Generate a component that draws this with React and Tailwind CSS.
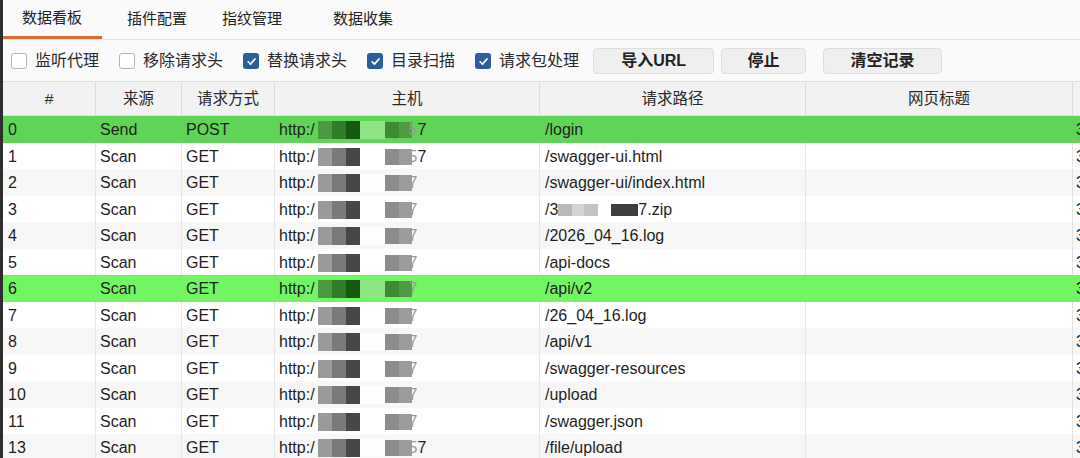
const rows = [
  { id: "0", src: "Send", method: "POST", tail: "57", path: "/login", hl: "a" },
  { id: "1", src: "Scan", method: "GET", tail: "57", path: "/swagger-ui.html" },
  { id: "2", src: "Scan", method: "GET", tail: "7", path: "/swagger-ui/index.html" },
  { id: "3", src: "Scan", method: "GET", tail: "7", path: "zip" },
  { id: "4", src: "Scan", method: "GET", tail: "7", path: "/2026_04_16.log" },
  { id: "5", src: "Scan", method: "GET", tail: "7", path: "/api-docs" },
  { id: "6", src: "Scan", method: "GET", tail: "7", path: "/api/v2", hl: "b" },
  { id: "7", src: "Scan", method: "GET", tail: "7", path: "/26_04_16.log" },
  { id: "8", src: "Scan", method: "GET", tail: "7", path: "/api/v1" },
  { id: "9", src: "Scan", method: "GET", tail: "7", path: "/swagger-resources" },
  { id: "10", src: "Scan", method: "GET", tail: "7", path: "/upload" },
  { id: "11", src: "Scan", method: "GET", tail: "7", path: "/swagger.json" },
  { id: "13", src: "Scan", method: "GET", tail: "57", path: "/file/upload" },
];

const cols = "grid grid-cols-[93px_86px_93px_265px_266px_267px_1fr]";

function Checkbox({ checked, label }) {
  return (
    <label className="flex items-center gap-[8px]">
      {checked ? (
        <span className="w-[16px] h-[16px] rounded-[3px] bg-[#2d5d9c] flex items-center justify-center">
          <svg width="11" height="11" viewBox="0 0 12 12" fill="none">
            <path d="M2.3 6.3 L4.9 8.9 L9.8 3.2" stroke="#fff" strokeWidth="1.8" strokeLinecap="round" strokeLinejoin="round" />
          </svg>
        </span>
      ) : (
        <span className="w-[16px] h-[16px] rounded-[3px] border border-[#b5b5b5] bg-white" />
      )}
      <span className="text-[16px] text-[#2a2a2a]">{label}</span>
    </label>
  );
}

function Mosaic({ green }) {
  const a = green ? ["#4a9a3e", "#2f7d29", "#155a10"] : ["#9a9a9a", "#7a7a7a", "#474747"];
  const b = green ? ["#3d8a33", "#4f9a44"] : ["#8c8c8c", "#9c9c9c"];
  return (
    <span className="inline-flex items-center h-[20px] ml-[3px]">
      <span className="w-[14px] h-[18px]" style={{ background: a[0] }} />
      <span className="w-[14px] h-[18px]" style={{ background: a[1] }} />
      <span className="w-[14px] h-[18px]" style={{ background: a[2] }} />
      <span className={`w-[25px] h-[18px] ${green ? "bg-[#8fe484]" : "bg-white/70"}`} />
      <span className="w-[14px] h-[16px]" style={{ background: b[0] }} />
      <span className="w-[13px] h-[16px]" style={{ background: b[1] }} />
    </span>
  );
}

function Row({ r, i }) {
  const bg = r.hl === "a" ? "bg-[#5fd457]" : r.hl === "b" ? "bg-[#72f563]" : i % 2 ? "bg-white" : "bg-[#f7f7f7]";
  const sep = r.hl ? "" : "border-r border-[#e6e6e6]";
  return (
    <div className={`${cols} h-[26.5px] items-center text-[16px] text-[#1f1f1f] ${bg}`}>
      <div className={`pl-[5px] pt-[2px] h-full flex items-center ${sep}`}>{r.id}</div>
      <div className={`pl-[4px] pt-[2px] h-full flex items-center ${sep}`}>{r.src}</div>
      <div className={`pl-[4px] pt-[2px] h-full flex items-center ${sep}`}>{r.method}</div>
      <div className={`pl-[4px] pt-[2px] h-full flex items-center ${sep}`}>
        <span>http:/</span>
        <Mosaic green={!!r.hl} />
        <span className="-ml-[3px]">{r.tail.length > 1 ? <><span className="text-[#9a9a9a]">5</span>7</> : <span className="text-[#9a9a9a]">7</span>}</span>
      </div>
      <div className={`pl-[5px] pt-[2px] h-full flex items-center ${sep}`}>
        {r.path === "zip" ? (
          <>
            <span>/3</span>
            <span className="inline-flex items-center">
              <span className="w-[14px] h-[12px] bg-[#b9b9b9]" />
              <span className="w-[12px] h-[12px] bg-[#d4d4d4]" />
              <span className="w-[14px] h-[12px] bg-[#c4c4c4]" />
              <span className="w-[13px] h-[12px] bg-white" />
              <span className="w-[27px] h-[12px] bg-[#3e3e3e]" />
            </span>
            <span>7.zip</span>
          </>
        ) : (
          r.path
        )}
      </div>
      <div className={`h-full ${r.hl ? "" : "border-r border-[#e2e2e2]"}`} />
      <div className="pl-[3px] pt-[2px] h-full flex items-center">3</div>
    </div>
  );
}

export default function App() {
  return (
    <div
      className="w-[1080px] h-[458px] overflow-hidden bg-[#fafafa] border-l-[3px] border-[#2e2e2e]"
      style={{ fontFamily: '"Liberation Sans", "Noto Sans CJK SC", sans-serif' }}
    >
      {/* tabs */}
      <div className="h-[40px] flex items-end border-b border-[#e3e3e3] text-[15px] text-[#222]">
        <div className="w-[99px] h-full flex flex-col">
          <div className="flex-1 flex items-center pl-[19px]">数据看板</div>
          <div className="h-[3px] bg-[#d46d38]" />
        </div>
        <div className="h-full flex items-center pl-[25px] pr-[35px]">插件配置</div>
        <div className="h-full flex items-center pr-[51px]">指纹管理</div>
        <div className="h-full flex items-center">数据收集</div>
      </div>

      {/* toolbar */}
      <div className="h-[41px] flex items-center pl-[8px] pt-[1px]">
        <div className="flex items-center gap-[20px]">
          <Checkbox label="监听代理" />
          <Checkbox label="移除请求头" />
          <Checkbox checked label="替换请求头" />
          <Checkbox checked label="目录扫描" />
          <Checkbox checked label="请求包处理" />
        </div>
        <div className="flex items-center ml-[14px] text-[16px] font-bold text-[#222]">
          <button className="w-[121px] h-[26px] rounded-[4px] bg-[#efefef] border border-[#dedede]">导入URL</button>
          <button className="w-[85px] h-[26px] rounded-[4px] bg-[#efefef] border border-[#dedede] ml-[7px]">停止</button>
          <button className="w-[119px] h-[26px] rounded-[4px] bg-[#efefef] border border-[#dedede] ml-[17px]">清空记录</button>
        </div>
      </div>

      {/* table */}
      <div className="bg-white">
        <div className={`${cols} h-[35px] bg-[#f2f2f2] border-t border-b border-[#e0e0e0] text-[15.5px] text-[#2a2a2a]`}>
          {["#", "来源", "请求方式", "主机", "请求路径", "网页标题"].map((h) => (
            <div key={h} className="flex items-center justify-center pt-[1px] border-r border-[#dcdcdc]">
              {h}
            </div>
          ))}
          <div />
        </div>
        {rows.map((r, i) => (
          <Row key={r.id} r={r} i={i} />
        ))}
      </div>
    </div>
  );
}
